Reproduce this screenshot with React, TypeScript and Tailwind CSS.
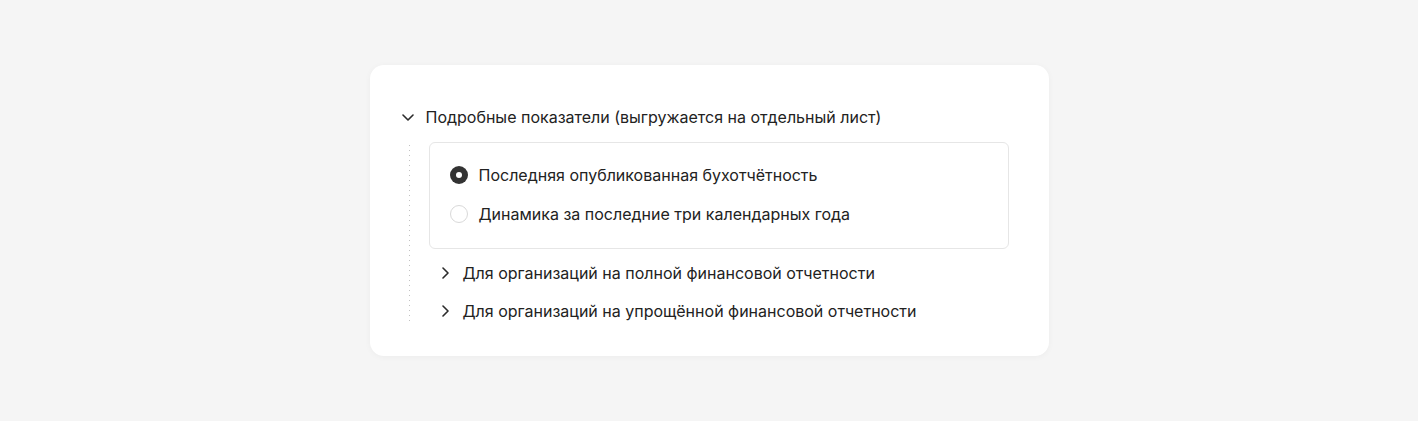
import React, { useState } from 'react';

type Option = { id: string; label: string };

const options: Option[] = [
  { id: 'last', label: 'Последняя опубликованная бухотчётность' },
  { id: 'dynamics', label: 'Динамика за последние три календарных года' },
];

const groups = [
  'Для организаций на полной финансовой отчетности',
  'Для организаций на упрощённой финансовой отчетности',
];

function ChevronDown() {
  return (
    <svg width="12" height="7" viewBox="0 0 12 7" fill="none" className="shrink-0">
      <path d="M1 1l5 5 5-5" stroke="#2b2b2b" strokeWidth="1.6" strokeLinecap="round" strokeLinejoin="round" />
    </svg>
  );
}

function ChevronRight() {
  return (
    <svg width="7" height="12" viewBox="0 0 7 12" fill="none" className="shrink-0">
      <path d="M1 1l5 5-5 5" stroke="#2b2b2b" strokeWidth="1.6" strokeLinecap="round" strokeLinejoin="round" />
    </svg>
  );
}

function Radio({ checked }: { checked: boolean }) {
  return checked ? (
    <span className="flex h-[18px] w-[18px] shrink-0 items-center justify-center rounded-full bg-[#333333]">
      <span className="h-[6px] w-[6px] rounded-full bg-white" />
    </span>
  ) : (
    <span className="h-[18px] w-[18px] shrink-0 rounded-full border border-[#d9d9d9] bg-white" />
  );
}

export default function App() {
  const [value, setValue] = useState('last');

  return (
    <div
      className="flex h-[421px] w-full items-center justify-center bg-[#f5f5f5] text-[16px] leading-6 text-[#222222]"
      style={{ fontFamily: 'Inter, "Noto Sans", sans-serif' }}
    >
      <div className="w-[679px] rounded-[14px] bg-white pb-[33px] pl-8 pr-10 pt-10 shadow-[0_1px_6px_rgba(0,0,0,0.04)]">
        <div className="flex items-center gap-3">
          <ChevronDown />
          <span>Подробные показатели (выгружается на отдельный лист)</span>
        </div>

        {/* dotted guide line on the left */}
        <div className="ml-[7px] mt-[13px] bg-[linear-gradient(#c2c2c2_1px,transparent_1px)] bg-[length:1px_5px] bg-left bg-repeat-y pl-[20px]">
          <div className="flex flex-col gap-[15px] rounded-[6px] border border-[#e6e6e6] pb-[22px] pl-5 pt-5">
            {options.map((o) => (
              <label key={o.id} className="flex cursor-pointer items-center gap-[11px]" onClick={() => setValue(o.id)}>
                <Radio checked={value === o.id} />
                <span>{o.label}</span>
              </label>
            ))}
          </div>

          <div className="mt-3 flex flex-col gap-[14px] pl-[13px]">
            {groups.map((g) => (
              <div key={g} className="flex items-center gap-[14px]">
                <ChevronRight />
                <span>{g}</span>
              </div>
            ))}
          </div>
        </div>
      </div>
    </div>
  );
}
